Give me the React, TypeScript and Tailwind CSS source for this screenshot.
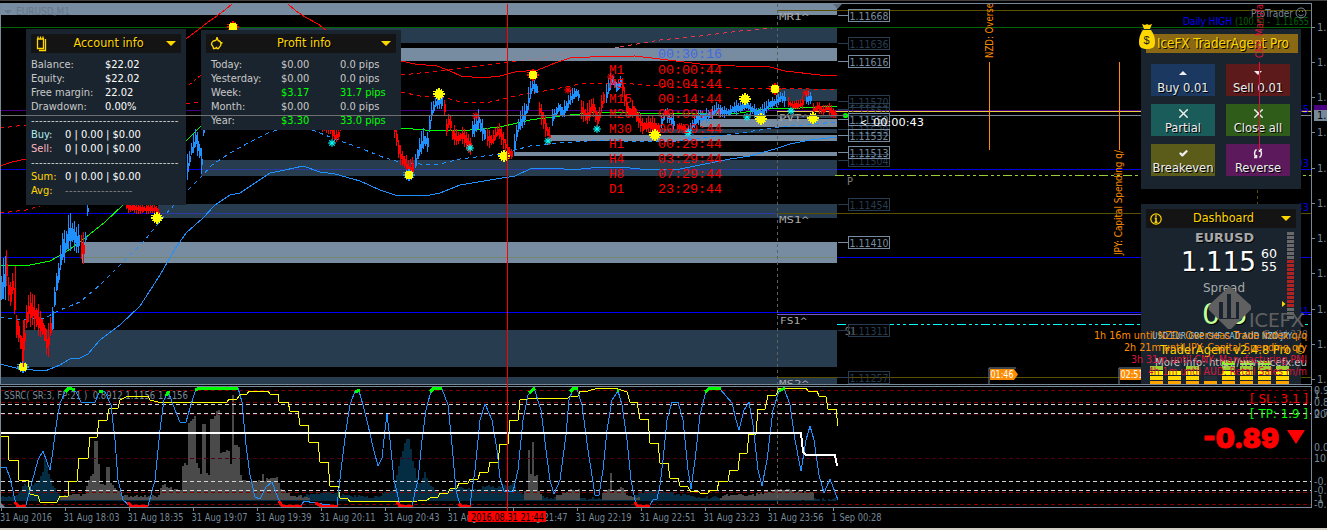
import type { ReactNode } from 'react';
import { Check, X } from 'lucide-react';

type Point = [number, number];

const SLATE = '#778899';
const STEEL = '#283c50';
const SILVER = '#778ca0';

const toPoints = (flat: number[]): Point[] => {
  const points: Point[] = [];
  for (let i = 0; i < flat.length; i += 2) points.push([flat[i], flat[i + 1]]);
  return points;
};

// supply / demand zones: x, y, height, color
const zones: [number, number, number, string][] = [
  [1, 4, 11, SILVER],
  [233, 28, 15, STEEL],
  [300, 48, 13, SILVER],
  [777, 89, 12, STEEL],
  [777, 115, 3, STEEL],
  [700, 119, 8, SILVER],
  [660, 129, 4, STEEL],
  [551, 135, 6, SILVER],
  [514, 152, 4, SILVER],
  [201, 160, 16, STEEL],
  [158, 204, 14, STEEL],
  [82, 242, 21, SILVER],
  [24, 330, 37, STEEL],
  [1, 377, 7, STEEL],
];

const candleRuns: { up: boolean; path: number[]; spread: number }[] = [
  { up: true, spread: 16, path: [1, 290, 5, 272] },
  { up: false, spread: 14, path: [6, 270, 9, 300, 13, 280, 15, 325, 19, 335, 21, 350, 23, 352, 25, 322, 28, 310, 33, 312, 38, 322, 43, 330, 47, 348, 50, 328] },
  { up: true, spread: 18, path: [52, 320, 55, 288, 59, 270, 61, 248, 64, 248, 68, 235, 72, 234, 76, 241, 79, 240] },
  { up: false, spread: 14, path: [81, 248, 83, 250] },
  { up: true, spread: 6, path: [85, 238, 87, 210, 88, 195] },
  { up: false, spread: 5, path: [126, 207, 140, 209, 155, 209, 158, 214] },
  { up: true, spread: 10, path: [187, 168, 191, 150, 195, 139, 199, 152, 201, 162, 203, 130] },
  { up: false, spread: 6, path: [322, 126, 330, 128, 334, 137, 338, 135, 342, 120] },
  { up: false, spread: 9, path: [392, 120, 396, 138, 399, 155, 404, 163, 409, 172, 413, 166] },
  { up: true, spread: 9, path: [415, 162, 418, 150, 423, 140, 427, 143, 430, 115, 434, 105, 438, 99, 442, 103] },
  { up: false, spread: 8, path: [444, 108, 446, 128, 449, 119, 452, 135, 457, 139, 462, 136, 466, 142, 470, 147] },
  { up: true, spread: 9, path: [472, 130, 475, 127, 478, 120, 481, 130, 484, 135] },
  { up: false, spread: 7, path: [487, 138, 491, 141, 494, 136, 498, 130, 501, 137, 505, 146, 508, 153, 512, 155] },
  { up: true, spread: 9, path: [514, 146, 517, 128, 521, 120, 525, 114, 528, 100, 531, 86, 534, 88, 537, 90] },
  { up: false, spread: 9, path: [539, 110, 543, 121, 546, 130, 550, 140] },
  { up: true, spread: 7, path: [552, 118, 555, 113, 558, 108, 562, 113, 566, 107, 570, 98, 575, 93, 579, 97] },
  { up: false, spread: 9, path: [581, 110, 585, 116, 588, 114, 592, 105, 596, 119, 598, 120, 601, 105, 604, 96] },
  { up: true, spread: 9, path: [606, 95, 609, 83, 612, 80, 616, 88, 620, 82] },
  { up: false, spread: 8, path: [622, 88, 626, 107, 629, 114, 633, 109, 637, 119, 642, 127, 648, 125, 653, 127, 659, 130] },
  { up: true, spread: 6, path: [661, 122, 665, 113, 669, 119, 673, 123] },
  { up: false, spread: 5, path: [677, 127, 682, 128, 686, 131] },
  { up: true, spread: 6, path: [688, 133, 692, 125, 697, 118, 703, 117, 710, 115, 716, 110, 722, 112, 728, 113, 733, 109, 740, 108, 745, 104, 750, 109, 756, 113, 762, 112, 768, 105, 774, 103, 780, 98, 785, 100] },
  { up: false, spread: 5, path: [788, 103, 792, 106, 798, 105, 803, 102] },
  { up: true, spread: 6, path: [806, 99, 811, 98] },
  { up: false, spread: 5, path: [813, 110, 818, 107, 822, 112, 826, 107, 831, 112, 836, 115] },
];

// stable pseudo random value in 0..1
const noise = (n: number) => {
  const s = Math.sin(n * 12.9898) * 43758.5453;
  return s - Math.floor(s);
};

const valueAt = (points: Point[], x: number) => {
  for (let i = 1; i < points.length; i++) {
    if (x <= points[i][0]) {
      const [x0, y0] = points[i - 1];
      const [x1, y1] = points[i];
      return y0 + ((y1 - y0) * (x - x0)) / (x1 - x0);
    }
  }
  return points[points.length - 1][1];
};

const runPath = (flat: number[], spread: number) => {
  const points = toPoints(flat);
  let d = '';
  for (let x = points[0][0]; x <= points[points.length - 1][0]; x += 2) {
    const y = valueAt(points, x);
    const body = spread * (0.5 + noise(x) * 0.6);
    const wick = spread * (0.55 + noise(x + 7) * 0.9);
    d += `M${x} ${(y - body / 2).toFixed(0)}h2v${body.toFixed(0)}h-2z`;
    d += `M${x} ${(y - wick).toFixed(0)}h1v${(wick * 1.8).toFixed(0)}h-1z`;
  }
  return d;
};

const Line = ({ pts, color, width = 1, dash }: { pts: number[]; color: string; width?: number; dash?: string }) => (
  <polyline points={pts.join(' ')} fill="none" stroke={color} strokeWidth={width} strokeDasharray={dash} shapeRendering="crispEdges" />
);

const HLine = ({ y, from = 1, to = 1311, color, width = 1, dash }: { y: number; from?: number; to?: number; color: string; width?: number; dash?: string }) => (
  <line x1={from} x2={to} y1={y + 0.5} y2={y + 0.5} stroke={color} strokeWidth={width} strokeDasharray={dash} shapeRendering="crispEdges" />
);

type LabelProps = { x: number; y: number; w?: number; size?: number; color?: string; font?: 'sans' | 'mono' | 'console'; weight?: number; children: string };

const fonts = {
  sans: '"DejaVu Sans Condensed", "DejaVu Sans", sans-serif',
  mono: '"Liberation Mono", monospace',
  console: '"DejaVu Sans Mono", monospace',
};

const Label = ({ x, y, w, size = 11, color = SLATE, font = 'sans', weight, children }: LabelProps) => (
  <text
    x={x}
    y={y}
    fontSize={size}
    fill={color}
    fontWeight={weight}
    textLength={w}
    lengthAdjust="spacingAndGlyphs"
    fontFamily={fonts[font]}
    xmlSpace="preserve"
  >
    {children}
  </text>
);

const spikes = [0, 45, 90, 135];

const Sun = ({ x, y, ring = '#ffff00' }: { x: number; y: number; ring?: string }) => (
  <g transform={`translate(${x} ${y})`} shapeRendering="crispEdges">
    {[0, 30, 60, 90, 120, 150].map((a) => (
      <line key={a} x1="-6" x2="6" stroke={ring} strokeWidth="1.5" transform={`rotate(${a})`} />
    ))}
    <circle r="4.5" fill="#ffff00" />
  </g>
);

const Star = ({ x, y, color }: { x: number; y: number; color: string }) => (
  <g transform={`translate(${x} ${y})`} stroke={color} strokeWidth="1.2">
    {spikes.map((a) => (
      <line key={a} x1="-3.8" x2="3.8" transform={`rotate(${a})`} />
    ))}
  </g>
);

const priceTags: [string, number, string][] = [
  ['1.11636', 43, STEEL],
  ['1.11570', 101, STEEL],
  ['1.11557', 109, STEEL],
  ['1.11539', 129, STEEL],
  ['1.11504', 160, STEEL],
  ['1.11454', 204, STEEL],
  ['1.11311', 330, STEEL],
  ['1.11257', 377, STEEL],
  ['1.11668', 15, SILVER],
  ['1.11616', 61, SILVER],
  ['1.11550', 119, SILVER],
  ['1.11532', 135, SILVER],
  ['1.11513', 152, SILVER],
  ['1.11410', 242, SILVER],
];

const timers = [
  ['M1', '00:00:44'],
  ['M5', '00:04:44'],
  ['M15', '00:14:44'],
  ['M20', '00:09:44'],
  ['M30', '00:29:44'],
  ['H1', '00:29:44'],
  ['H4', '03:29:44'],
  ['H8', '07:29:44'],
  ['D1', '23:29:44'],
];

const suns: [number, number, string?][] = [
  [233, 27, '#ff0000'], [157, 218], [23, 367, '#1e90ff'], [409, 175, '#1e90ff'], [439, 94], [504, 156],
  [533, 75, '#ff0000'], [655, 135], [745, 99], [761, 119], [775, 89, '#ff0000'], [813, 118],
];

const PriceChart = () => (
  <svg width="1327" height="385" viewBox="0 0 1327 385" className="block shrink-0">
    <rect width="1327" height="385" fill="#000" />
    <rect width="1327" height="1" fill="#404040" />
    {zones.map(([x, y, h, color]) => (
      <rect key={`${x}-${y}`} x={x} y={y} width={837 - x} height={h} fill={color} />
    ))}
    <polygon points="833,4 842,4 837.5,9" fill="#5c6b7a" />
    <Label x={16} y={15} w={54} color="#66788a">EURUSD,M1</Label>
    <polygon points="4,10 12,10 8,14" fill="#66788a" />

    <HLine y={27} color="#006400" />
    <HLine y={110} color="#4b0082" />
    <HLine y={169} color="#0000e0" />
    <HLine y={169} from={201} to={837} color="#2b3aa0" />
    <HLine y={213} to={777} color="#0000e0" />
    <HLine y={213} from={158} to={777} color="#2b3aa0" />
    <HLine y={213} from={777} color="#5a5000" />
    <HLine y={257} color="#0000e0" />
    <HLine y={257} from={82} to={837} color="#74866e" />
    <HLine y={312} color="#0000ff" />
    <HLine y={314} from={777} color="#6a5acd" />
    <HLine y={10} from={777} color="#5a5000" />
    <HLine y={377} from={777} color="#5a5000" />
    <HLine y={111} from={777} color="#e8d040" />
    <HLine y={115} from={837} color={SLATE} />
    <HLine y={175} from={835} color="#9acd32" dash="9 3 3 3 3 3" />
    <HLine y={324} from={837} color="#00ffff" dash="9 3 3 3 3 3" />
    <line x1="777.5" x2="777.5" y1="4" y2="385" stroke="#606060" strokeDasharray="3 3" />
    <line x1="1257.5" x2="1257.5" y1="190" y2="205" stroke="#5a5000" strokeDasharray="3 3" />

    <Line color="#ff0000" pts={[0, 166, 12, 162, 26, 159]} />
    <Line color="#ff0000" pts={[186, 39, 198, 30, 208, 22, 217, 16, 226, 9, 232, 4]} />
    <Line color="#ff0000" pts={[288, 4, 296, 11, 305, 17, 318, 24, 326, 30]} />
    <Line color="#ff0000" pts={[401, 61, 415, 64, 437, 66, 450, 71, 461, 76, 482, 78, 500, 76, 515, 72, 538, 70, 555, 63, 570, 58, 590, 57, 635, 56, 660, 59, 700, 64, 735, 66, 770, 67, 785, 71, 820, 75, 837, 75]} />
    <Line color="#ff0000" dash="4 4" pts={[0, 128, 26, 125]} />
    <Line color="#ff0000" dash="4 4" pts={[0, 213, 26, 210, 40, 206]} />
    <Line color="#ff0000" dash="3 3" pts={[189, 85, 201, 75]} />
    <Line color="#ff0000" dash="4 4" pts={[186, 104, 201, 102]} />
    <Line color="#ff0000" dash="4 4" pts={[401, 75, 440, 71, 480, 66, 520, 61]} />
    <Line color="#a08088" dash="4 4" pts={[520, 61, 560, 55, 600, 50, 620, 47]} />
    <Line color="#e83848" dash="4 4" pts={[620, 47, 660, 40, 700, 36, 740, 31, 772, 28]} />
    <Line color="#ff0000" dash="4 4" pts={[401, 92, 420, 96, 440, 96, 460, 102, 490, 102, 520, 95, 550, 90, 580, 84, 620, 83, 670, 87, 730, 88, 780, 88, 837, 90]} />
    <Line color="#00ff00" pts={[0, 265, 30, 265, 50, 261, 66, 252, 85, 238, 105, 222, 123, 205, 150, 172, 186, 141, 201, 126]} />
    <Line color="#00ff00" pts={[401, 128, 425, 130, 470, 130, 500, 127, 530, 120, 560, 116, 590, 113, 620, 112, 660, 114, 740, 113, 770, 108, 800, 108, 837, 106]} />
    <Line color="#1e90ff" dash="4 4" pts={[0, 317, 20, 320, 45, 318, 60, 310, 80, 302, 100, 285, 120, 265, 145, 240, 165, 215, 186, 192, 200, 178, 212, 165, 230, 153, 250, 142, 270, 132, 290, 127, 310, 129, 335, 139, 360, 148, 385, 158, 400, 162, 420, 164, 440, 164, 460, 159, 500, 154, 530, 146, 560, 143, 600, 140, 640, 142, 680, 141, 700, 138, 740, 133, 780, 127, 837, 122]} />
    <Line color="#1e90ff" pts={[0, 364, 20, 369, 45, 371, 60, 365, 70, 359, 80, 358, 88, 354, 100, 340, 120, 325, 140, 306, 160, 275, 175, 249, 186, 233, 203, 218, 215, 205, 230, 195, 240, 193, 255, 183, 270, 173, 285, 170, 303, 166, 320, 172, 335, 174, 360, 181, 380, 190, 395, 195, 425, 196, 440, 193, 460, 185, 490, 180, 515, 176, 532, 168, 555, 168, 572, 170, 600, 167, 620, 167, 650, 170, 680, 169, 710, 163, 730, 159, 750, 156, 775, 149, 790, 144, 810, 140, 837, 137]} />

    {candleRuns.map((run) => (
      <path key={run.path[0]} d={runPath(run.path, run.spread)} fill={run.up ? '#1e90ff' : '#ff0000'} shapeRendering="crispEdges" />
    ))}
    <line x1="15.5" x2="15.5" y1="266" y2="300" stroke="#ff0000" />
    <line x1="5.5" x2="5.5" y1="256" y2="300" stroke="#1e90ff" />

    <circle cx="688" cy="134" r="5" fill="none" stroke="#1e90ff" strokeDasharray="2 2" />
    {suns.map(([x, y, ring]) => (
      <Sun key={`${x}-${y}`} x={x} y={y} ring={ring} />
    ))}
    <line x1="23.5" x2="23.5" y1="320" y2="367" stroke="#ff0000" />
    {[[332, 143], [470, 148], [548, 141], [597, 129], [747, 117], [791, 111], [688, 133]].map(([x, y]) => (
      <Star key={x} x={x} y={y} color="#00ffff" />
    ))}
    {[[476, 116], [568, 90], [611, 77], [667, 113], [806, 93]].map(([x, y]) => (
      <Star key={x} x={x} y={y} color="#ff0000" />
    ))}

    <Label x={658} y={58} w={64} size={12.5} color="#4169e1" font="mono">00:30:16</Label>
    {timers.map(([name, left], i) => (
      <g key={name}>
        <Label x={609} y={73.5 + i * 14.95} w={name.length * 7.6} size={12.5} color="#ff0000" font="mono">{name}</Label>
        <Label x={658} y={73.5 + i * 14.95} w={64} size={12.5} color="#ff0000" font="mono">{left}</Label>
      </g>
    ))}

    <Label x={779} y={20} w={30} size={9.5} color="#a9a9a9" font="console">MR1^</Label>
    <Label x={779} y={121} w={30} size={9.5} color="#a9a9a9" font="console">PVT^</Label>
    <Label x={779} y={223} w={30} size={9.5} color="#a9a9a9" font="console">MS1^</Label>
    <Label x={780} y={324} w={27} size={9.5} color="#a9a9a9" font="console">FS1^</Label>
    <Label x={779} y={387} w={30} size={9.5} color="#a9a9a9" font="console">MS2^</Label>
    <Label x={847} y={185} w={6} size={10} color="#808080">P</Label>
    <Label x={845} y={335} w={11} size={10} color="#808080">S1</Label>

    {priceTags.map(([price, y, color]) => (
      <g key={price}>
        <HLine y={y} from={838} to={848} color={color} />
        <rect x="848.5" y={y - 5.5} width="41" height="12" fill="none" stroke={color} />
        <Label x={849.5} y={y + 4.5} w={39} size={10.5} color={color}>{price}</Label>
      </g>
    ))}
    <circle cx="845.5" cy="115.5" r="2.6" fill="#00ff00" />
    <Label x={860} y={126} w={7} color="#ffffff">&lt;</Label>
    <Label x={873} y={126} w={51} color="#ffffff">00:00:43</Label>

    <g transform="rotate(-90 993 58)">
      <Label x={993} y={58} w={55} color="#ff8c00">NZD: Overse</Label>
    </g>
    <g transform="rotate(-90 1122 255)">
      <Label x={1122} y={255} w={105} color="#ff8c00">JPY: Capital Spending q/</Label>
    </g>
    <path d="M989.5 62V150M1119.5 62V150" stroke="#ff8c00" shapeRendering="crispEdges" />
    <path d="M989 384V368H1016M1119 384V368H1141" fill="none" stroke={SLATE} />
    <polygon points="990,369 1014,369 1018,374.5 1014,380 990,380" fill="#ff8c00" />
    <rect x="1120" y="369" width="22" height="11" fill="#ff8c00" />
    <Label x={990.5} y={378} w={23} size={10} color="#ffffff">01:46</Label>
    <Label x={1120.5} y={378} w={23} size={10} color="#ffffff">02:51</Label>

    <Label x={1183} y={25} w={49} color="#0000ff">Daily HIGH</Label>
    <Label x={1235} y={25} w={74} color="#006400">(100.5) -  1.11655</Label>
    <Label x={1251} y={17} w={42}>ProTrader</Label>
    <g stroke={SLATE} fill="none">
      <circle cx="1301" cy="13" r="5" />
      <path d="M1298.5 14.5q2.5 3 5 0M1299.5 11v1M1302.5 11v1" />
    </g>
    {[['55', 113], ['93', 167], ['43', 211], ['31', 315]].map(([text, y]) => (
      <Label key={text} x={1297} y={Number(y)} w={12} color="#0000e0">{String(text)}</Label>
    ))}

    {[27, 62, 97, 132, 168, 203, 238, 273, 309, 344, 379].map((y) => (
      <g key={y}>
        <HLine y={y} from={1311} to={1315} color={SLATE} />
        <Label x={1317} y={y + 4}>1.11</Label>
      </g>
    ))}
    <rect x="1314" y="105" width="13" height="6" fill="#4b0082" />
    <rect x="1314" y="110" width="13" height="11" fill={SLATE} />
    <Label x={1317} y={119} color="#000000">1.11</Label>

    <rect x="0" y="3" width="1312" height="1" fill={SLATE} />
    <rect x="0" y="3" width="1" height="382" fill={SLATE} />
    <rect x="1311" y="3" width="1" height="382" fill={SLATE} />
    <rect x="0" y="384" width="1312" height="1" fill={SLATE} />
  </svg>
);

const oscillator = [
  0, 467, 6, 467, 10, 478, 15, 500, 18, 505, 26, 505, 32, 482, 38, 460, 43, 451, 47, 462, 50, 470, 53, 450, 57, 420, 60, 403, 66, 390, 72, 389, 76, 392, 81, 402, 95, 402, 100, 391, 105, 392, 111, 405, 115, 440, 118, 480, 123, 500, 130, 506, 148, 506, 155, 480, 160, 430, 164, 400, 168, 391, 175, 410, 180, 422, 186, 422, 190, 408, 195, 392, 200, 388, 238, 388, 242, 402, 246, 445, 250, 475, 255, 497, 260, 499, 266, 487, 272, 482, 278, 498, 281, 505, 301, 506, 304, 501, 315, 503, 337, 506, 341, 470, 346, 430, 350, 405, 355, 391, 359, 391, 363, 405, 368, 425, 373, 447, 378, 466, 382, 458, 385, 430, 387, 414, 390, 440, 394, 480, 400, 505, 412, 505, 418, 480, 422, 440, 426, 410, 431, 391, 436, 388, 442, 389, 448, 405, 452, 445, 456, 490, 460, 505, 470, 505, 475, 470, 480, 420, 485, 404, 492, 420, 497, 450, 500, 478, 504, 491, 513, 492, 518, 470, 523, 420, 528, 395, 534, 388, 541, 410, 546, 450, 550, 480, 554, 494, 560, 480, 566, 435, 569, 400, 573, 389, 577, 389, 582, 405, 588, 450, 595, 495, 599, 495, 603, 470, 607, 430, 612, 400, 618, 391, 622, 405, 627, 440, 631, 480, 636, 505, 650, 505, 653, 500, 657, 499, 660, 485, 663, 460, 667, 420, 672, 402, 678, 402, 683, 420, 688, 470, 691, 489, 695, 460, 700, 415, 706, 391, 712, 388, 720, 389, 726, 396, 732, 403, 736, 420, 739, 430, 744, 410, 749, 402, 753, 425, 758, 470, 762, 486, 767, 460, 773, 410, 779, 391, 784, 388, 790, 405, 795, 440, 801, 471, 806, 440, 810, 426, 814, 440, 819, 475, 824, 493, 830, 479, 838, 500,
];

const trend = [
  0, 436, 8, 436, 9, 460, 18, 460, 19, 480, 28, 480, 30, 494, 38, 496, 40, 502, 57, 502, 60, 496, 68, 496, 69, 481, 77, 481, 79, 458, 88, 458, 90, 437, 97, 437, 99, 420, 107, 420, 109, 409, 118, 408, 120, 400, 128, 396, 148, 396, 150, 400, 158, 402, 227, 402, 229, 399, 237, 399, 240, 395, 247, 394, 249, 391, 268, 391, 270, 394, 278, 394, 279, 402, 288, 402, 290, 411, 298, 411, 300, 425, 308, 425, 309, 442, 318, 442, 320, 462, 328, 462, 330, 486, 338, 486, 340, 498, 348, 499, 350, 502, 418, 501, 427, 500, 430, 498, 438, 497, 440, 493, 448, 493, 450, 489, 457, 488, 459, 483, 468, 483, 470, 479, 478, 479, 480, 472, 488, 472, 490, 462, 498, 462, 500, 444, 508, 444, 510, 420, 518, 420, 520, 400, 528, 399, 568, 398, 570, 396, 578, 396, 580, 391, 588, 391, 598, 388, 618, 389, 627, 392, 630, 402, 637, 402, 640, 419, 648, 419, 650, 443, 658, 443, 660, 463, 668, 463, 670, 478, 678, 478, 680, 486, 688, 487, 690, 491, 698, 491, 700, 493, 708, 493, 710, 490, 717, 490, 719, 481, 728, 481, 730, 470, 738, 470, 740, 453, 747, 453, 749, 434, 756, 434, 758, 409, 765, 409, 768, 395, 776, 395, 779, 388, 806, 388, 808, 391, 817, 391, 819, 396, 826, 397, 828, 409, 836, 409, 838, 426,
];

const navyBars = [0, 498, 15, 495, 20, 489, 23, 484, 29, 488, 38, 480, 43, 470, 44, 457, 48, 475, 52, 485, 56, 492, 62, 499, 250, 499, 300, 496, 312, 494, 325, 491, 341, 495, 375, 497, 393, 490, 398, 465, 404, 443, 408, 438, 412, 460, 416, 477, 419, 486, 424, 473, 427, 480, 432, 488, 440, 493, 453, 487, 465, 488, 478, 490, 485, 485, 500, 487, 513, 483, 516, 490, 526, 497, 570, 499, 630, 497, 640, 492, 655, 490, 668, 492, 676, 494, 700, 497, 838, 500];

const grayBars: number[][] = [
  [60, 497, 68, 495, 86, 495],
  [86, 486, 90, 475, 93, 474, 94, 440, 97, 440, 98, 465, 99, 485, 105, 485, 106, 467, 109, 466, 110, 484, 114, 488, 124, 496, 158, 496, 160, 487, 165, 485, 168, 488, 178, 490, 181, 488, 182, 465, 187, 463, 188, 423, 193, 418, 195, 412, 196, 464, 201, 476, 202, 424, 205, 422, 206, 474, 209, 474, 210, 420, 215, 415, 216, 410, 219, 409, 220, 453, 229, 450, 230, 463, 231, 463, 232, 394, 233, 394, 234, 445, 238, 447, 239, 472, 242, 480, 250, 481, 261, 481, 262, 474, 264, 480, 276, 477, 280, 489, 290, 495, 310, 498],
  [524, 490, 527, 490, 528, 451, 529, 451, 530, 474, 531, 474, 532, 443, 533, 443, 534, 475, 537, 475, 538, 491, 542, 498],
  [556, 495, 565, 491, 579, 490, 580, 498],
  [602, 493, 609, 488, 610, 474, 611, 474, 612, 491, 622, 488, 626, 494, 640, 498],
  [720, 497, 740, 493, 746, 496, 770, 491, 780, 490, 812, 492, 813, 499],
];

const barsPath = (flat: number[], base = 501) => {
  const points = toPoints(flat);
  const end = points[points.length - 1][0];
  let d = `M${points[0][0]} ${base}`;
  for (let x = points[0][0]; x < end; x += 2) {
    const y = valueAt(points, x) + (noise(x) - 0.5) * 3;
    d += `V${Math.min(base, y).toFixed(0)}H${x + 2}`;
  }
  return `${d}V${base}z`;
};

const overbought = [[195, 390, 200, 388, 238, 388], [65, 392, 69, 388, 75, 390], [99, 392, 103, 391], [166, 396, 169, 391], [355, 392, 360, 390], [430, 392, 434, 388, 442, 388], [529, 393, 535, 388], [570, 392, 574, 388, 578, 389], [617, 391, 619, 390], [705, 392, 710, 388, 721, 389], [779, 391, 785, 388]];
const oversold = [[15, 502, 18, 506, 26, 506], [128, 502, 131, 506, 148, 506], [279, 501, 282, 506, 302, 506], [315, 503, 322, 506, 338, 506], [397, 502, 400, 506, 413, 506], [459, 504, 461, 506, 471, 506], [635, 502, 637, 506, 650, 506]];

const OscillatorChart = () => (
  <svg width="1327" height="123" viewBox="0 385 1327 123" className="block shrink-0">
    <rect y="385" width="1327" height="123" fill="#000" />
    <path d={barsPath(navyBars)} fill="#042c42" shapeRendering="crispEdges" />
    {grayBars.map((bars) => (
      <path key={bars[0]} d={barsPath(bars, 500)} fill="#4a4a4a" shapeRendering="crispEdges" />
    ))}
    {[390, 402, 492, 504].map((y) => (
      <HLine key={y} y={y} color="#800000" dash="4 3" />
    ))}
    <HLine y={414} color="#4b0018" dash="4 3" />
    <HLine y={458} color="#4b0018" dash="4 3" />
    {[404, 413, 481, 490].map((y) => (
      <HLine key={y} y={y} color="#d3d3d3" dash="4 3" />
    ))}
    <line x1="777.5" x2="777.5" y1="387" y2="507" stroke="#606060" strokeDasharray="3 3" />
    <Label x={4} y={399} w={184}>SSRC( SR:3, FP:21 )  0.8912 1.1156 1.1156</Label>
    <Line pts={trend} color="#ffff00" />
    <Line pts={oscillator} color="#1e90ff" />
    {overbought.map((pts) => (
      <Line key={pts[0]} pts={pts} color="#00ff00" width={3} />
    ))}
    {oversold.map((pts) => (
      <Line key={pts[0]} pts={pts} color="#ff0000" width={3} />
    ))}
    <Line pts={[1, 433, 801, 433, 803, 452, 806, 455, 835, 455, 837, 466]} color="#ffffff" width={2} />

    <Label x={1250} y={403} w={58} size={13} color="#ff0000">[ SL: 3.1 ]</Label>
    <Label x={1250} y={418} w={58} size={13} color="#00ff00">[ TP: 1.9 ]</Label>
    <text x="1203" y="448" fontSize="27" fontWeight="900" fill="#ff0000" stroke="#ff0000" strokeWidth="0.9" textLength="76" lengthAdjust="spacingAndGlyphs" fontFamily="Inter, sans-serif">-0.89</text>
    <polygon points="1287,430 1305,430 1296,444" fill="#ff0000" />

    {[['0.9', 394], ['1', 398], ['0.8', 406], ['0.7', 417], ['20', 418], ['0.0', 451], ['10', 462], ['-0.7', 485], ['-0.8', 494], ['-1', 503], ['-0.9', 508]].map(([text, y]) => (
      <Label key={text} x={1314} y={Number(y)} size={10.5}>{String(text)}</Label>
    ))}
    <rect y="386" width="1312" height="1" fill={SLATE} />
    <rect y="386" width="1" height="122" fill={SLATE} />
    <rect x="1311" y="386" width="1" height="122" fill={SLATE} />
    <rect y="507" width="1312" height="1" fill={SLATE} />
    <polygon points="0,502 5,507 0,507" fill={SLATE} />
  </svg>
);

const times = ['31 Aug 2016', '31 Aug 18:03', '31 Aug 18:35', '31 Aug 19:07', '31 Aug 19:39', '31 Aug 20:11', '31 Aug 20:43', '31 Aug 21:15', '31 Aug 21:47', '31 Aug 22:19', '31 Aug 22:51', '31 Aug 23:23', '31 Aug 23:56', '1 Sep 00:28'];

const TimeAxis = () => (
  <svg width="1327" height="22" viewBox="0 508 1327 22" className="block shrink-0">
    <rect y="508" width="1327" height="22" fill="#000" />
    {times.map((time, i) => (
      <g key={time}>
        <rect x={1 + i * 64} y="508" width="1" height="3" fill={SLATE} />
        <Label x={i * 64 - (i ? 0.5 : 0)} y={521} w={i === 0 ? 52 : i === 13 ? 50 : 56}>{time}</Label>
      </g>
    ))}
    <rect x="468" y="511" width="78" height="11" fill="#ff0000" />
    <Label x={471} y={520.5} w={73} size={10.5} color="#000000">2016.08.31 21:44</Label>
    <rect y="528" width="1327" height="2" fill="#d4d0c8" />
  </svg>
);

const NotepadIcon = () => (
  <svg width="12" height="16" viewBox="0 0 12 16" fill="none" stroke="currentColor" strokeWidth="1.3">
    <path d="M2.5 3v9.5h6V3zM3 2.5v-2M5.5 2.5v-2M8 2.5v-2M10.5 3v11.5H4" />
  </svg>
);

const PiggyIcon = () => (
  <svg width="13" height="13" viewBox="0 0 13 13" fill="none" stroke="currentColor" strokeWidth="1.3">
    <path d="M1.5 7.5c0-2.5 2-4 4-4l2-2 .5 2c2 .5 3 2 3 3.5 0 1.700-1 2.500-1.500 3l-1 1.500H7l-.5-1-1.500 1H3.500L3 9.500zM6 1h2M10.500 5.500l2 .5" />
  </svg>
);

const InfoIcon = () => (
  <svg width="12" height="12" viewBox="0 0 12 12" fill="none" stroke="currentColor">
    <circle cx="6" cy="6" r="5.2" strokeWidth="1.2" />
    <path d="M6 2.200v1.600M4.700 5.200H6v4M4.500 9.200h3" strokeWidth="1.6" />
  </svg>
);

const CycleIcon = () => (
  <svg width="10" height="11" viewBox="0 0 10 11" fill="none" stroke="currentColor" strokeWidth="1.5">
    <path d="M3.500 1.500C1 3 1 7.500 3 9M1 9.500h2.500V7M6.500 9.500C9 8 9 3.500 7 2M9 1.500H6.500V4" />
  </svg>
);

const PanelHeader = ({ icon, title }: { icon: ReactNode; title: string }) => (
  <div className="flex h-[19px] items-center justify-between bg-[#141414] px-1 text-[#ffd700]">
    {icon}
    <span className="pl-1 text-[12.5px] leading-none whitespace-nowrap [text-shadow:1px_1px_0_#000]">{title}</span>
    <span className="mr-px border-x-[5px] border-t-[5px] border-x-transparent border-t-[#ffd700]" />
  </div>
);

const accountRows = [
  ['Balance:', '$22.02'],
  ['Equity:', '$22.02'],
  ['Free margin:', '22.02'],
  ['Drawdown:', '0.00%'],
];

const Dashes = () => <div className="h-[14px] overflow-hidden whitespace-nowrap tracking-[0.42px] text-[#d3d3d3]">-------------------------------------</div>;

const AccountPanel = () => (
  <section className="absolute left-[26px] top-[29px] h-[176px] w-[160px] bg-[#1a242e] px-[5px] pt-[5px]">
    <PanelHeader icon={<NotepadIcon />} title="Account info" />
    <div className="mt-[5px] text-[11px] leading-[14px] text-[#c8c8c8]">
      {accountRows.map(([name, value]) => (
        <div key={name} className="flex">
          <span className="w-[74px]">{name}</span>
          <span className="text-white">{value}</span>
        </div>
      ))}
      <Dashes />
      <div className="flex"><span className="w-[34px] text-[#afeeee]">Buy:</span><span className="text-white">0 | 0.00 | $0.00</span></div>
      <div className="flex"><span className="w-[34px] text-[#ffb6c1]">Sell:</span><span className="text-white">0 | 0.00 | $0.00</span></div>
      <Dashes />
      <div className="flex"><span className="w-[34px] text-[#ffd700]">Sum:</span><span className="text-white">0 | 0.00 | $0.00</span></div>
      <div className="flex"><span className="w-[34px] text-[#ffd700]">Avg:</span><span className="tracking-[0.42px] text-[#808080]">-----------------</span></div>
    </div>
  </section>
);

const profitRows = [
  ['Today:', '$0.00', '0.0 pips'],
  ['Yesterday:', '$0.00', '0.0 pips'],
  ['Week:', '$3.17', '31.7 pips'],
  ['Month:', '$0.00', '0.0 pips'],
  ['Year:', '$3.30', '33.0 pips'],
];

const ProfitPanel = () => (
  <section className="absolute left-[201px] top-[30px] h-[100px] w-[200px] bg-[#1a242e] px-[5px] pt-[4px]">
    <PanelHeader icon={<PiggyIcon />} title="Profit info" />
    <div className="mt-[5px] pl-[5px] text-[11px] leading-[14px] text-[#c8c8c8]">
      {profitRows.map(([name, money, pips]) => (
        <div key={name} className="flex">
          <span className="w-[70px]">{name}</span>
          <span className={money === '$0.00' ? 'w-[59px]' : 'w-[59px] text-[#00ff00]'}>{money}</span>
          <span className={money === '$0.00' ? '' : 'text-[#00ff00]'}>{pips}</span>
        </div>
      ))}
    </div>
  </section>
);

const tradeButtons = [
  { label: 'Buy 0.01', color: 'bg-[#1a3860]', icon: <span className="border-x-4 border-b-4 border-x-transparent border-b-[#eee]" /> },
  { label: 'Sell 0.01', color: 'bg-[#5c1a1a]', icon: <span className="border-x-4 border-t-4 border-x-transparent border-t-[#eee]" /> },
  { label: 'Partial', color: 'bg-[#1a5c5a]', icon: <X size={15} strokeWidth={2.4} /> },
  { label: 'Close all', color: 'bg-[#305c1a]', icon: <X size={15} strokeWidth={2.4} /> },
  { label: 'Breakeven', color: 'bg-[#5c5c1a]', icon: <Check size={9} strokeWidth={6} /> },
  { label: 'Reverse', color: 'bg-[#5c1a5c]', icon: <CycleIcon /> },
];

const TradePanel = () => (
  <section className="absolute left-[1141px] top-[29px] h-[160px] w-[160px] bg-[#1a242e] pt-[5px]">
    <div className="ml-[5px] h-[19px] w-[152px] bg-[#8b6914] pl-[11px] text-[13.3px] leading-[20px] whitespace-nowrap text-[#ffd700] [text-shadow:1px_1px_0_#000]">
      IceFX TraderAgent Pro
    </div>
    <div className="ml-[10px] mt-[11px] grid w-[139px] grid-cols-2 gap-x-[11px] gap-y-2">
      {tradeButtons.map(({ label, color, icon }) => (
        <button key={label} className={`flex h-8 flex-col items-center text-[12.8px] text-[#eee] [text-shadow:1px_1px_0_#000] ${color}`}>
          <span className="flex h-[17px] items-center justify-center pt-px">{icon}</span>
          <span className="leading-[14px] whitespace-nowrap">{label}</span>
        </button>
      ))}
    </div>
    <svg className="absolute -left-[3px] -top-[6px]" width="18" height="28" viewBox="0 0 18 28">
      <path d="M4 1l3 1 2-1 2 1 3-1-2 5h-6z" fill="#ffd700" />
      <path d="M5 7h8c3 4 4 8 4 12 0 5-2 7-8 7s-8-2-8-7C1 15 2 11 5 7z" fill="#ffd700" />
      <text x="8.500" y="21" fontSize="11" textAnchor="middle" fill="#222" fontFamily="Liberation Sans, sans-serif">$</text>
    </svg>
  </section>
);

const strength = [4, 3, 4, 1, 5, 5, 5, 4];
const strengthColors = ['#ffa500', '#ffd700', '#ffff00', '#9acd32', '#7fff00'];

const DashboardPanel = () => (
  <section className="absolute left-[1141px] top-[204px] h-[180px] w-[160px] overflow-hidden bg-[#1a242e] px-[5px] pt-[5px]">
    <PanelHeader icon={<InfoIcon />} title="Dashboard" />
    <svg width="152" height="156" viewBox="1146 228 152 156" className="block">
      <Label x={1196} y={243} w={59} size={13} weight={700} color="#000000">EURUSD</Label>
      <Label x={1195} y={242} w={59} size={13} weight={700} color="#a9a9a9">EURUSD</Label>
      <Label x={1182} y={272} w={75} size={27} color="#000000">1.115</Label>
      <Label x={1181} y={271} w={75} size={27} color="#ffffff">1.115</Label>
      <Label x={1261} y={258} w={16} size={12} color="#ffffff">60</Label>
      <Label x={1261} y={271} w={16} size={12} color="#ffffff">55</Label>
      <Label x={1203} y={292} w={42} size={13} color="#a9a9a9">Spread</Label>
      <Label x={1203} y={325} w={46} size={29} color="#000000">0.5</Label>
      <Label x={1202} y={324} w={46} size={29} color="#c0ff98">0.5</Label>
      {Array.from({ length: 22 }, (_, i) => (
        <rect key={i} x="1287" y={232 + i * 4} width="7" height="3" fill={i > 6 && i < 19 ? '#b22222' : '#696969'} />
      ))}
      <polygon points="1282,301 1285.5,304 1282,307" fill="#ffd700" />
      {strength.map((level, col) =>
        strengthColors.map((color, row) => (
          <rect key={`${col}-${row}`} x={1150 + col * 18} y={381 - row * 5} width="13" height="4" fill={row < level ? color : '#232e39'} />
        )),
      )}
    </svg>
  </section>
);

// everything the terminal paints above the panels
const Overlay = () => (
  <svg width="1327" height="530" viewBox="0 0 1327 530" className="pointer-events-none absolute left-0 top-0">
    <HLine y={115} to={846} color="#707070" />
    <line x1="507.5" x2="507.5" y1="4" y2="511" stroke="#ff0000" shapeRendering="crispEdges" />
    <g transform="rotate(-90 1263 58)">
      <Label x={1263} y={58} w={54} color="#dc143c">CNY: Manufa</Label>
    </g>
    <path d="M1259.5 62V150" stroke="#dc143c" />
    <path d="M1229.5 286l21.500 19.500v4l-20 19.500h-3l-19.500-19.500v-4z" fill="#606060" />
    <path d="M1219 302h4v17h-4zM1227 294h4v25h-4zM1236 302h3v17h-3z" fill="#1a242e" />
    <path d="M1223 318.500h13" stroke="#1a242e" />
    <text x="1249" y="327" fontSize="20" fill="#606060" textLength="55" lengthAdjust="spacingAndGlyphs" fontFamily="Lato, sans-serif">ICEFX</text>
    <Label x={1264} y={338} w={44} color="#606060">Build 228</Label>
    <Label x={1152} y={339} w={140} size={9} color="#87ceeb">USD EUR GBP CHF CAD AUD NZD JPY</Label>
    <Label x={1160} y={354} w={146} size={13} color="#ffd700">TraderAgent v2.4.8 Pro ©</Label>
    <Label x={1155} y={366} w={152} color="#c8c8c8">More info: http://www.icefx.eu</Label>
    <Label x={1094} y={339} w={213} color="#ff8c00">1h 16m until NZD: Overseas Trade Index q/q</Label>
    <Label x={1124} y={351} w={183} color="#ff8c00">2h 21m until JPY: Capital Spending q/y</Label>
    <Label x={1131} y={363} w={176} color="#dc143c">3h 31m until CNY: Manufacturing PMI</Label>
    <Label x={1148} y={375} w={159} color="#dc143c">4h 1m until AUD: Retail Sales m/m</Label>
  </svg>
);

export default function App() {
  return (
    <main className="relative flex h-[530px] w-[1327px] flex-col overflow-hidden bg-black font-['DejaVu_Sans_Condensed','DejaVu_Sans',sans-serif]">
      <PriceChart />
      <OscillatorChart />
      <TimeAxis />
      <AccountPanel />
      <ProfitPanel />
      <TradePanel />
      <DashboardPanel />
      <Overlay />
    </main>
  );
}
